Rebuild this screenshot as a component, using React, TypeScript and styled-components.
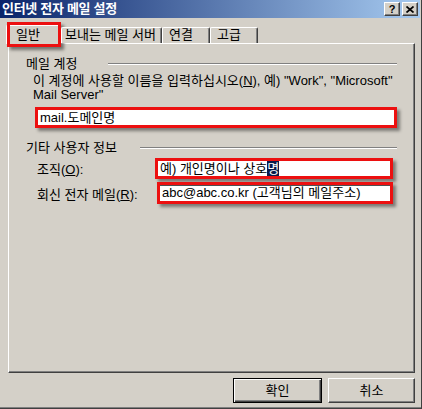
import React from "react";
import styled, { createGlobalStyle } from "styled-components";

const FONT = `"Liberation Sans", "Noto Sans CJK KR", sans-serif`;
const FACE = "#d4d0c8";
const RED = "#ec1010";

const Global = createGlobalStyle`
  html, body { margin: 0; padding: 0; background: ${FACE}; }
  body { font-family: ${FONT}; }
`;

const Window = styled.div`
  width: 422px;
  height: 409px;
  box-sizing: border-box;
  background: ${FACE};
  border-right: 1px solid #404040;
  border-bottom: 1px solid #404040;
  font-family: ${FONT};
  font-size: 13px;
  color: #000;
  overflow: hidden;
  display: flex;
`;

const Frame = styled.div`
  flex: 1;
  display: flex;
  flex-direction: column;
  border-right: 1px solid #808080;
  border-bottom: 1px solid #808080;
`;

const TitleBar = styled.div`
  height: 18px;
  margin-right: 2px;
  flex: none;
  display: flex;
  align-items: center;
  justify-content: space-between;
  padding: 0 2px 0 2px;
  background: linear-gradient(to right, #0a246a 0%, #a6caf0 100%);
  color: #fff;
`;

const TitleText = styled.div`
  font-weight: bold;
  font-size: 13px;
  letter-spacing: -0.3px;
  line-height: 18px;
  white-space: nowrap;
`;

const CaptionButtons = styled.div`
  display: flex;
  gap: 2px;
`;

const CaptionButton = styled.div`
  width: 16px;
  height: 14px;
  box-sizing: border-box;
  background: ${FACE};
  border: 1px solid;
  border-color: #fff #404040 #404040 #fff;
  box-shadow: inset -1px -1px 0 #808080;
  display: flex;
  align-items: center;
  justify-content: center;
  color: #000;
  font-family: "Liberation Sans", sans-serif;
  font-weight: bold;
  font-size: 11px;
  line-height: 12px;
`;

const Body = styled.div`
  flex: 1;
  display: flex;
  flex-direction: column;
  padding: 7px 7px 0 8px;
`;

const TabStrip = styled.div`
  display: flex;
  align-items: flex-end;
  height: 18px;
  margin-left: -2px;
  position: relative;
  z-index: 2;
`;

const Tab = styled.div<{ $w: number; $pl: number; $active?: boolean }>`
  position: relative;
  box-sizing: border-box;
  width: ${(p) => p.$w}px;
  height: ${(p) => (p.$active ? 19 : 16)}px;
  margin-bottom: ${(p) => (p.$active ? -1 : 0)}px;
  padding-left: ${(p) => p.$pl}px;
  padding-top: ${(p) => (p.$active ? 2 : 0)}px;
  background: ${FACE};
  border-top: 1px solid #fff;
  border-left: 1px solid #fff;
  border-right: 1px solid #404040;
  box-shadow: inset -1px 0 0 #808080;
  border-radius: 2px 2px 0 0;
  line-height: 14px;
  white-space: nowrap;

  ${(p) =>
    p.$active &&
    `
    &::after {
      content: "";
      position: absolute;
      left: 0px;
      top: -4px;
      width: 54px;
      height: 25px;
      box-sizing: border-box;
      border: 3px solid ${RED};
      box-shadow: 3px 3px 3px rgba(0,0,0,0.45);
    }
  `}
`;

const Panel = styled.div`
  height: 330px;
  box-sizing: border-box;
  border: 1px solid;
  border-color: #fff #404040 #404040 #fff;
  box-shadow: inset -1px -1px 0 #808080;
  padding: 13px 17px 0 17px;
  display: flex;
  flex-direction: column;
  position: relative;
  z-index: 1;
`;

const GroupHeader = styled.div<{ $mt?: number }>`
  display: flex;
  align-items: center;
  height: 14px;
  line-height: 14px;
  margin-top: ${(p) => p.$mt ?? 0}px;
`;

const GroupLabel = styled.div<{ $w: number }>`
  width: ${(p) => p.$w}px;
  flex: none;
  white-space: nowrap;
`;

const Rule = styled.div`
  flex: 1;
  border-top: 1px solid #808080;
  border-bottom: 1px solid #fff;
`;

const Hint = styled.div`
  margin: 3px 0 0 7px;
  line-height: 14px;
  white-space: nowrap;
`;

const Field = styled.div<{ $w: number; $h: number; $mt?: number; $ml?: number; $sunken?: boolean }>`
  width: ${(p) => p.$w}px;
  height: ${(p) => p.$h}px;
  margin-top: ${(p) => p.$mt ?? 0}px;
  margin-left: ${(p) => p.$ml ?? 0}px;
  box-sizing: border-box;
  border: 3px solid ${RED};
  background: #fff;
  padding-left: 2px;
  line-height: ${(p) => p.$h - 6}px;
  white-space: nowrap;
  overflow: hidden;
  box-shadow: 3px 3px 3px rgba(0, 0, 0, 0.42)
    ${(p) => (p.$sunken ? ", inset 0 1px 0 #505050" : "")};
`;

const Row = styled.div<{ $mt: number }>`
  display: flex;
  align-items: center;
  padding-left: 11px;
  margin-top: ${(p) => p.$mt}px;
`;

const RowLabel = styled.div`
  width: 118px;
  flex: none;
  white-space: nowrap;
`;

const Sel = styled.span`
  background: #0a1a4a;
  color: #fff;
`;

const Footer = styled.div`
  display: flex;
  justify-content: flex-end;
  gap: 6px;
  padding-top: 5px;
`;

const Button = styled.div<{ $w: number; $default?: boolean }>`
  width: ${(p) => p.$w}px;
  height: 25px;
  box-sizing: border-box;
  display: flex;
  align-items: center;
  justify-content: center;
  line-height: 14px;
  ${(p) =>
    p.$default
      ? `
    border: 1px solid #000;
    box-shadow: inset 1px 1px 0 #fff, inset -1px -1px 0 #404040, inset -2px -2px 0 #808080;
  `
      : `
    border: 1px solid;
    border-color: #fff #404040 #404040 #fff;
    box-shadow: inset -1px -1px 0 #808080;
  `}
`;

const CloseGlyph = () => (
  <svg width="8" height="7" viewBox="0 0 8 7">
    <path d="M0.5 0.5 L7.5 6.5 M7.5 0.5 L0.5 6.5" stroke="#000" strokeWidth="1.7" />
  </svg>
);

export default function App() {
  return (
    <>
      <Global />
      <Window>
        <Frame>
          <TitleBar>
            <TitleText>인터넷 전자 메일 설정</TitleText>
            <CaptionButtons>
              <CaptionButton>?</CaptionButton>
              <CaptionButton>
                <CloseGlyph />
              </CaptionButton>
            </CaptionButtons>
          </TitleBar>
          <Body>
            <TabStrip>
              <Tab $w={55} $pl={9} $active>
                일반
              </Tab>
              <Tab $w={101} $pl={3}>
                보내는 메일 서버
              </Tab>
              <Tab $w={48} $pl={6}>
                연결
              </Tab>
              <Tab $w={48} $pl={6}>
                고급
              </Tab>
            </TabStrip>
            <Panel>
              <GroupHeader>
                <GroupLabel $w={82}>메일 계정</GroupLabel>
                <Rule />
              </GroupHeader>
              <Hint>
                이 계정에 사용할 이름을 입력하십시오(<u>N</u>), 예) "Work", "Microsoft"
                <br />
                Mail Server"
              </Hint>
              <Field $w={362} $h={21} $mt={5} $ml={9}>
                mail.도메인명
              </Field>
              <GroupHeader $mt={13}>
                <GroupLabel $w={114}>기타 사용자 정보</GroupLabel>
                <Rule />
              </GroupHeader>
              <Row $mt={3}>
                <RowLabel>
                  조직(<u>O</u>):
                </RowLabel>
                <Field $w={238} $h={21}>
                  예) 개인명이나 상호<Sel>명</Sel>
                </Field>
              </Row>
              <Row $mt={3}>
                <RowLabel>
                  회신 전자 메일(<u>R</u>):
                </RowLabel>
                <Field $w={236} $h={22} $ml={2} $sunken>
                  abc@abc.co.kr (고객님의 메일주소)
                </Field>
              </Row>
            </Panel>
            <Footer>
              <Button $w={89} $default>
                확인
              </Button>
              <Button $w={87}>취소</Button>
            </Footer>
          </Body>
        </Frame>
      </Window>
    </>
  );
}
